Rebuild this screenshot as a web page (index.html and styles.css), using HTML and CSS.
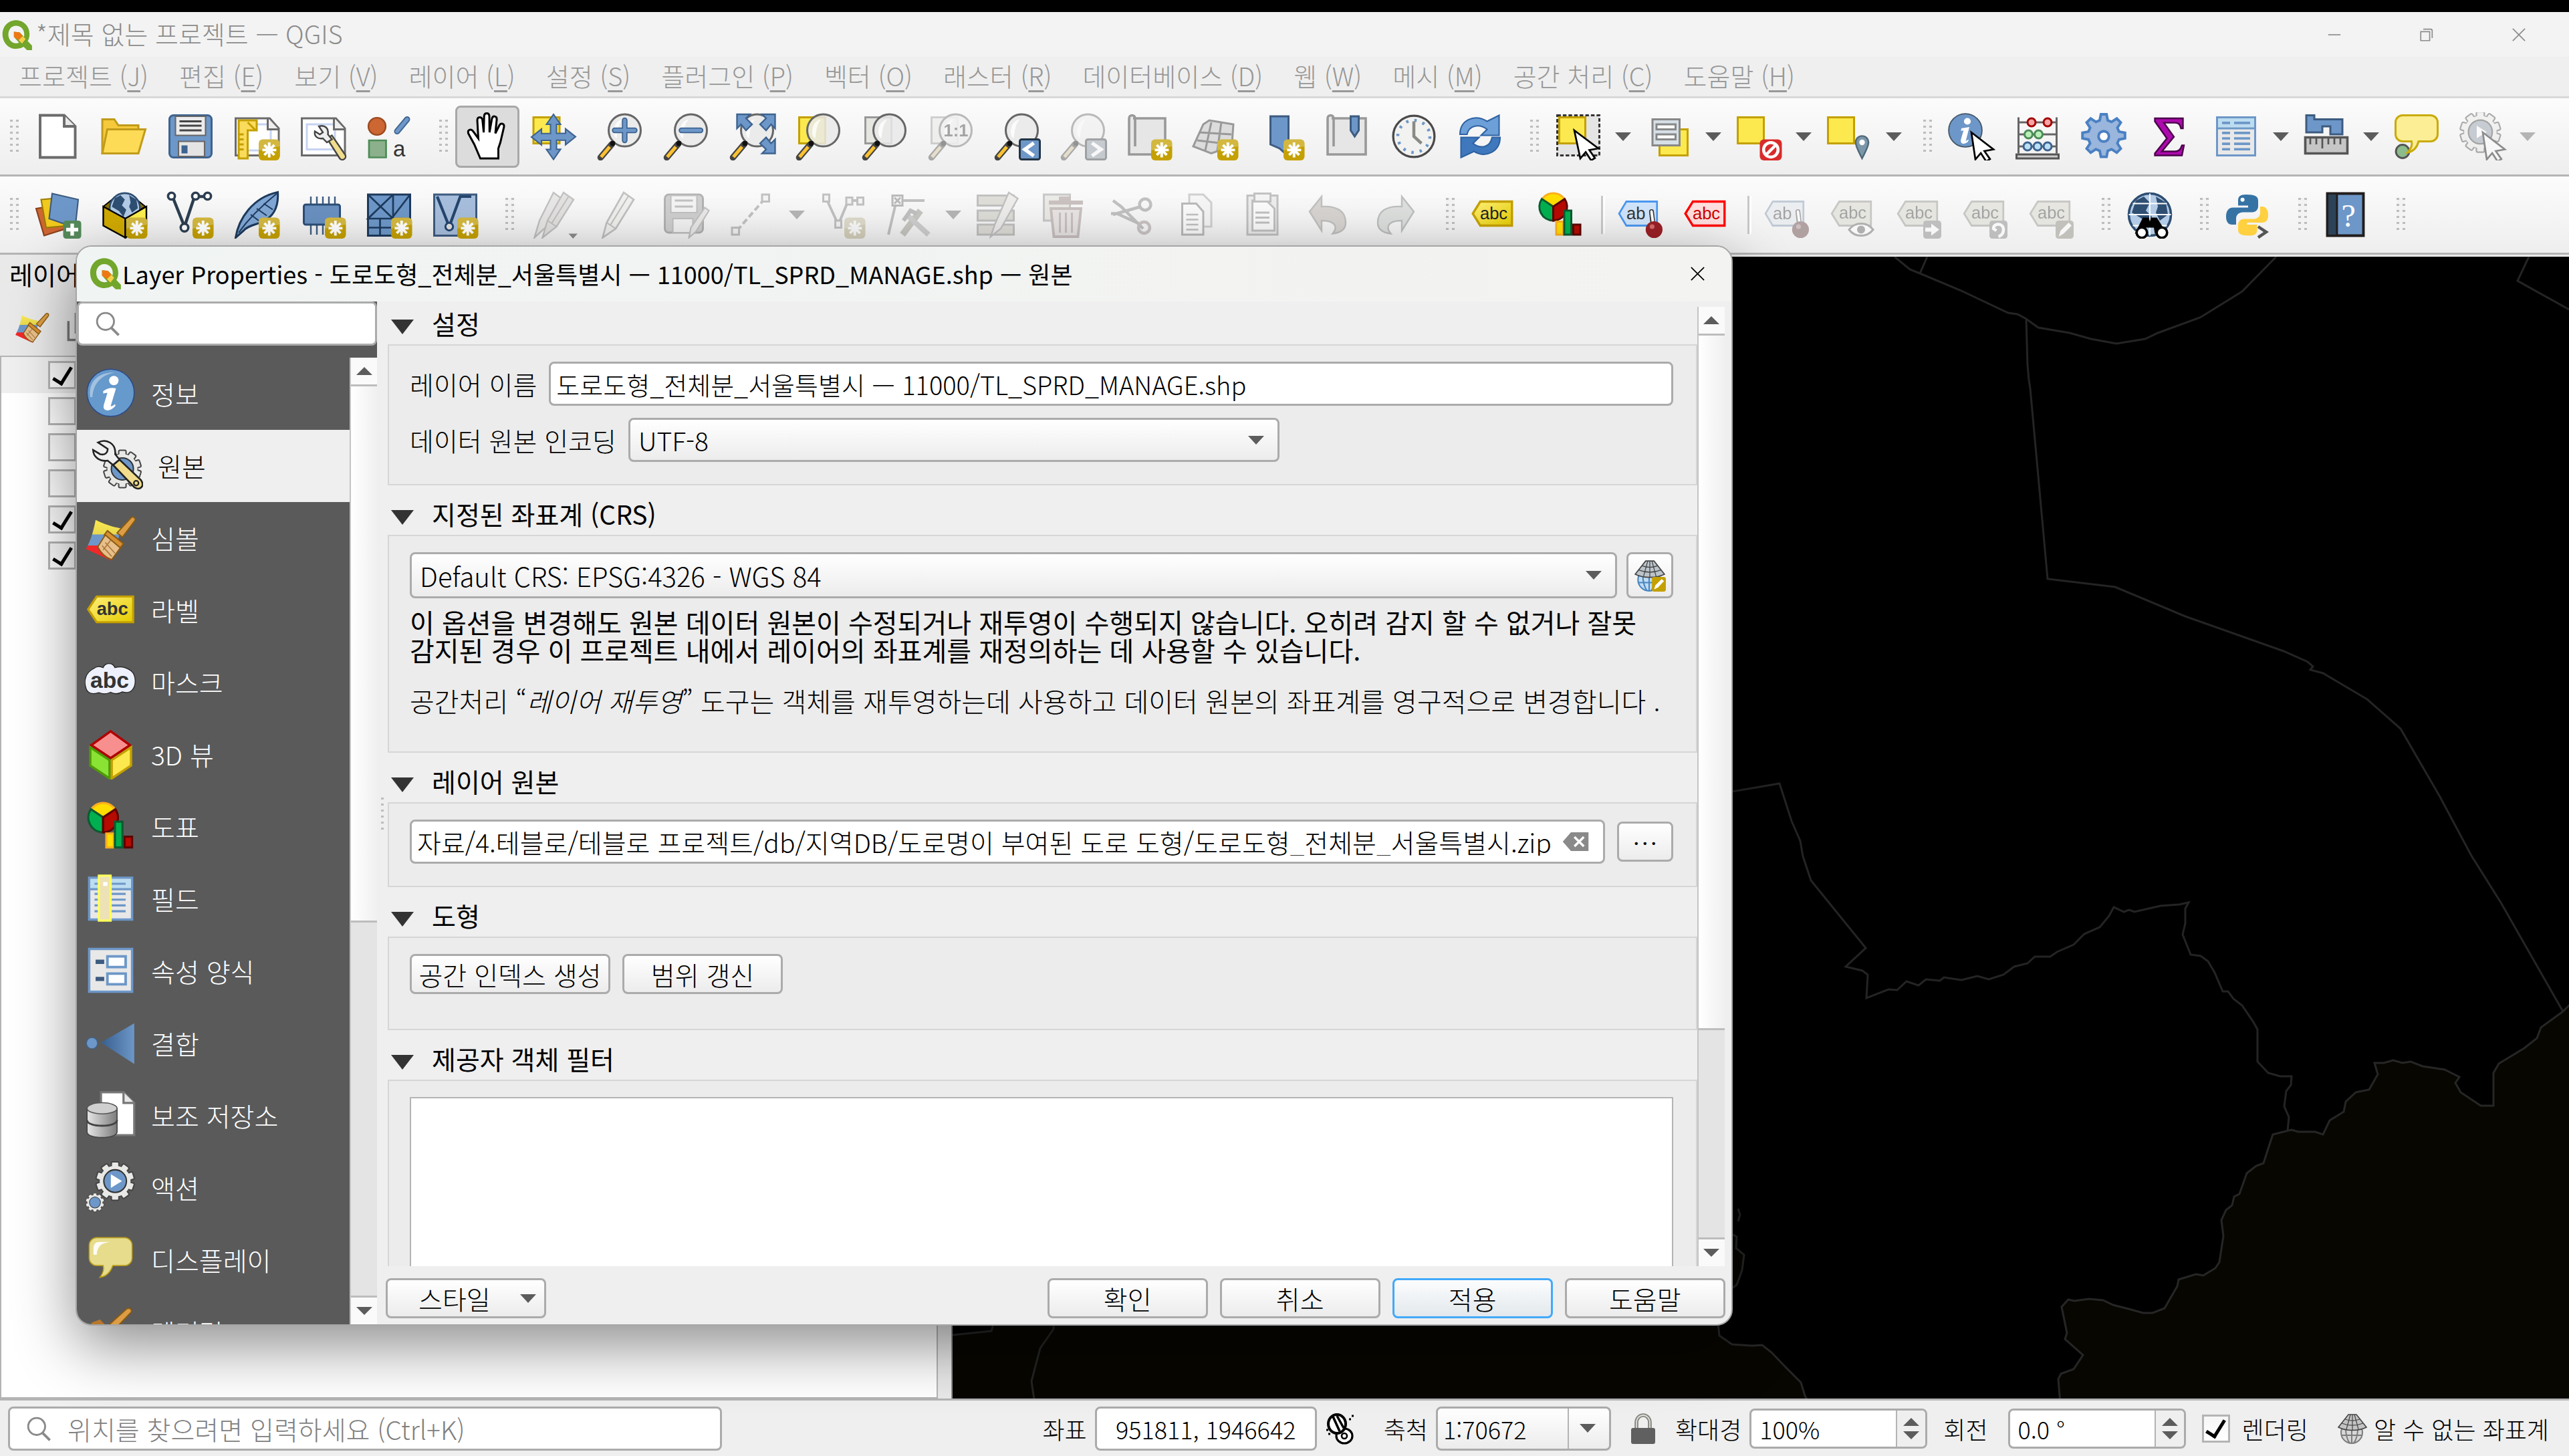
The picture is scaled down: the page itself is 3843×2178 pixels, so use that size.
FILE: index.html
```html
<!DOCTYPE html>
<html lang="ko">
<head>
  <meta charset="UTF-8" />
  <meta name="viewport" content="width=device-width, initial-scale=1.0"/>
  <title>*제목 없는 프로젝트 — QGIS</title>
  <link rel="stylesheet" href="styles.css">
</head>
<body>

  <!-- Icon sprite, 24 unit grid -->
  <svg class="sprite" aria-hidden="true">
    <defs>
      <linearGradient id="g-join" x1="0" y1="0" x2="1" y2="0"><stop offset="0" stop-color="#375f8f"/><stop offset="1" stop-color="#6d97c8"/></linearGradient>
      <linearGradient id="g-yellow" x1="0" y1="0" x2="1" y2="1"><stop offset="0" stop-color="#fff07a"/><stop offset="1" stop-color="#e4cb00"/></linearGradient>
      <linearGradient id="g-metal" x1="0" y1="0" x2="1" y2="0"><stop offset="0" stop-color="#e6e6e6"/><stop offset="1" stop-color="#7c7c7c"/></linearGradient>
      <linearGradient id="g-flag" x1="0" y1="0" x2="0" y2="1"><stop offset="0" stop-color="#fce94f"/><stop offset=".35" stop-color="#e8d94f"/><stop offset=".36" stop-color="#6d97c8"/><stop offset=".62" stop-color="#6d97c8"/><stop offset=".63" stop-color="#ef2929"/><stop offset="1" stop-color="#ef2929"/></linearGradient>
      <g id="p-star">
        <rect x="13" y="13.500" width="10.500" height="10.500" rx="2" fill="#c4a000"/>
        <path d="M13 19v-3.500a2 2 0 0 1 2-2h6.500a2 2 0 0 1 2 2V17z" fill="#fff" opacity=".25"/>
        <path d="M18.250 15v7.500M14.800 18.800h7M15.800 16.300l5 5M20.800 16.300l-5 5" stroke="#fff" stroke-width="1.300" fill="none"/>
      </g>
      <g id="p-lens">
        <path d="M8 16l-5.500 6.500" stroke="#444" stroke-width="3.200" stroke-linecap="round"/>
        <path d="M7 17.200l-4.300 5.100" stroke="#fcc131" stroke-width="1.700"/>
        <circle cx="14.500" cy="9" r="8" fill="#e9e9e9" fill-opacity=".85" stroke="#666" stroke-width="1"/>
        <path d="M9 10c0-4 2-6 4.500-6.500C11 6 11 10 10.500 13 9.500 12.500 9 11 9 10z" fill="#fff" opacity=".8"/>
        <circle cx="8.500" cy="15.500" r="1.300" fill="#111"/>
      </g>
      <g id="p-cursor"><path d="M12 10l11 8.500-4.500.8 2.800 4-1.900 1.200-2.700-4.200-2.700 3.200z" fill="#fff" stroke="#000" stroke-width=".9"/></g>
      <g id="p-gear"><path d="M10.600 1h2.800l.6 3 1.900.8 2.600-1.700 2 2-1.700 2.600.8 1.900 3 .6v2.800l-3 .6-.8 1.900 1.700 2.600-2 2-2.600-1.700-1.900.8-.6 3h-2.800l-.6-3-1.900-.8-2.600 1.700-2-2 1.700-2.600-.8-1.900-3-.6v-2.800l3-.6.8-1.900-1.700-2.600 2-2 2.600 1.700 1.900-.8z"/></g>
      <g id="p-cog">
        <g fill="#e8e8e6" stroke="#444" stroke-width=".8">
          <circle cx="12" cy="12" r="9"/>
          <rect x="9.800" y=".8" width="4.400" height="22.400" rx=".8"/>
          <rect x="9.800" y=".8" width="4.400" height="22.400" rx=".8" transform="rotate(36 12 12)"/>
          <rect x="9.800" y=".8" width="4.400" height="22.400" rx=".8" transform="rotate(72 12 12)"/>
          <rect x="9.800" y=".8" width="4.400" height="22.400" rx=".8" transform="rotate(108 12 12)"/>
          <rect x="9.800" y=".8" width="4.400" height="22.400" rx=".8" transform="rotate(144 12 12)"/>
        </g>
        <circle cx="12" cy="12" r="9" fill="#e8e8e6"/>
        <circle cx="12" cy="12" r="6.600" fill="#6d97c8" stroke="#333" stroke-width=".8"/>
      </g>
      <g id="p-tag"><path d="M1.500 12L5.500 6h17v12h-17z"/></g>
      <g id="p-globe">
        <circle cx="12" cy="12" r="10.500" fill="#b3cbe6" stroke="#2e4e72" stroke-width="1.200"/>
        <path d="M5 5l4-2 3 3-2 4 3 3-2 5-3-4-5-3zM15 3l5 3 1 6-4 3-2-4 1-3z" fill="#2e4e72"/>
      </g>
    </defs>

    <symbol id="i-qgis" viewBox="0 0 24 24">
      <path d="M11.500 1.500c5.500 0 9.700 4.300 9.700 10 0 2-.5 3.600-1.300 5l3.100 3.300V23h-3.600L17 20.600a10 10 0 0 1-5.500 1.500C6 22.100 1.800 17.500 1.800 11.600 1.800 5.800 6 1.500 11.500 1.500zm0 4C8.400 5.500 6 8 6 11.700c0 3.500 2.300 6.400 5.600 6.400.8 0 1.500-.2 2.100-.5L10 13.500V9.800l4.200.5 3 3.100c.2-.6.200-1.200.2-1.800 0-3.500-2.600-6.100-5.900-6.100z" fill="#72a62c"/>
      <path d="M10 9.800l3.800.4 2.600 2.700-3 3L10 13.500z" fill="#ee7913"/><path d="M13.400 15.900l3-3 2 2.100-2.600 3.300z" fill="#f5d04b"/>
    </symbol>
    <symbol id="i-new" viewBox="0 0 24 24"><path d="M3 1.500h12l5.500 5.500v15.500H3z" fill="#fff" stroke="#6b6b6b" stroke-width="1.300"/><path d="M15 1.500v5.500h5.500" fill="#e8e8e8" stroke="#6b6b6b" stroke-width="1.300"/></symbol>
    <symbol id="i-open" viewBox="0 0 24 24"><path d="M1 20.500v-17h6l2 3h10v4" fill="#f5c93b" stroke="#c19b1a"/><path d="M1 20.500L3.500 8.500H22.500l-3.500 12z" fill="#fedb57" stroke="#c19b1a"/></symbol>
    <symbol id="i-save" viewBox="0 0 24 24"><rect x="1.500" y="1.500" width="21" height="21" rx="2" fill="#6d97c8" stroke="#3d6390"/><path d="M4.500 2h15v9.500h-15z" fill="#ececec" stroke="#666" stroke-width=".7"/><path d="M6.500 4.500h11M6.500 6.700h11M6.500 9h11" stroke="#444"/><path d="M6 14.500h13v7.500H6z" fill="#e4e4e4" stroke="#666" stroke-width=".7"/><path d="M7.500 16.500h3v4h-3z" fill="#3d6390"/></symbol>
    <symbol id="i-layout-new" viewBox="0 0 24 24"><path d="M1.500 3h17l4.500 5v13.500H1.500z" fill="#fff" stroke="#6b6b6b"/><path d="M6 6h13v13H6z" fill="none" stroke="#c6d3f2"/><path d="M17.500 3v5.500H23" fill="#eee" stroke="#6b6b6b"/><path d="M3 4h9v5H7.500v14H3z" fill="#fbdb5b" stroke="#c4a000"/><path d="M3 11h2.500M3 13.500h2.500M3 16h2.500M3 18.500h2.500M7.500 5l4 4" stroke="#c4a000"/><use href="#p-star"/></symbol>
    <symbol id="i-layout-mgr" viewBox="0 0 24 24"><path d="M1.500 3h17l4.500 5v13.500H1.500z" fill="#fff" stroke="#6b6b6b"/><path d="M4 6h14v12.500H4z" fill="none" stroke="#c6d3f2"/><path d="M17.500 3v5.500H23" fill="#eee" stroke="#6b6b6b"/><path d="M14 13l2.500-1.500 6.500 9.500a1.600 1.600 0 0 1-2.600 2z" fill="#f0dc8c" stroke="#444" stroke-width=".8"/><path d="M10 7c3-1 5 1 4.500 4l2 2.500-2.500 1.500-2-2c-2.500.5-4.500-1-4-3.500l2.500 1.500 1.500-1z" fill="#eee" stroke="#444" stroke-width=".8"/></symbol>
    <symbol id="i-style" viewBox="0 0 24 24"><circle cx="6" cy="7" r="4.300" fill="#cc6633" stroke="#9c4a20" stroke-width=".8"/><path d="M16 9.500l5-6" stroke="#3d6390" stroke-width="3" stroke-linecap="round"/><path d="M16 9.500l5-6" stroke="#6d97c8" stroke-width="1.800" stroke-linecap="round"/><path d="M2 14h8.500v8.500H2z" fill="#8bb08b" stroke="#4d8b57" stroke-width=".9"/><text x="14" y="22" font-family="Liberation Sans" font-size="11" fill="#333">a</text></symbol>

    <symbol id="i-hand" viewBox="0 0 24 24"><path d="M8.500 23L5.500 16 2.500 10.500c-.5-2 1.500-2.500 2.600-.8l2.400 3.300-.5-9c0-2 2.300-2 2.600 0l.6 6 .2-8c.1-2 2.500-2 2.600 0l.1 8 1.200-6.800c.4-1.800 2.500-1.400 2.400.3L16 10.500l2-4c.8-1.500 2.600-.8 2.300.8L18.500 15l-1 3v5z" fill="#fff" stroke="#000" stroke-width="1"/></symbol>
    <symbol id="i-pan-sel" viewBox="0 0 24 24"><path d="M2 2.500h13v13H2z" fill="#fce94f" stroke="#c4a000"/><path d="M12 1l3.500 5h-2v4.500h4.500v-2.300l5 4-5 4v-2.300h-4.500v4.500h2L12 23.500l-3.500-5h2v-4.500H6v2.300l-5-4 5-4v2.300h4.500V6h-2z" fill="#6d97c8" stroke="#3d6390" stroke-width=".7"/></symbol>
    <symbol id="i-zoom-in" viewBox="0 0 24 24"><use href="#p-lens"/><path d="M14.500 4v10M9.500 9h10" stroke="#3d6390" stroke-width="2.800" stroke-linecap="round"/><path d="M14.500 4v10M9.500 9h10" stroke="#6d97c8" stroke-width="1.600" stroke-linecap="round"/></symbol>
    <symbol id="i-zoom-out" viewBox="0 0 24 24"><use href="#p-lens"/><path d="M9.800 9h9.500" stroke="#3d6390" stroke-width="2.800" stroke-linecap="round"/><path d="M9.800 9h9.500" stroke="#6d97c8" stroke-width="1.600" stroke-linecap="round"/></symbol>
    <symbol id="i-zoom-full" viewBox="0 0 24 24"><use href="#p-lens"/><path d="M4.500 1h6.500L9 3l3 3-3 3-2.500-3-2 2zM23.500 1H17l2 2-3 3 3 3 2.500-3 2 2zM23.500 20.500H17l2-2-3-3 3-3 2.500 3 2-2z" fill="#6d97c8" stroke="#3d6390" stroke-width=".8"/></symbol>
    <symbol id="i-zoom-sel" viewBox="0 0 24 24"><path d="M2.500 2.500h13v13h-13z" fill="#fce94f" stroke="#c4a000"/><use href="#p-lens"/></symbol>
    <symbol id="i-zoom-layer" viewBox="0 0 24 24"><path d="M2.500 2.500h13v13h-13z" fill="#e6e6e1" stroke="#999"/><use href="#p-lens"/></symbol>
    <symbol id="i-zoom-native" viewBox="0 0 24 24"><path d="M2.500 2.500h13v13h-13z" fill="#e6e6e1" stroke="#999"/><use href="#p-lens"/><text x="8.500" y="12" font-family="Liberation Sans" font-weight="bold" font-size="8.500" fill="#333">1:1</text></symbol>
    <symbol id="i-zoom-last" viewBox="0 0 24 24"><use href="#p-lens"/><rect x="13.500" y="13.500" width="10" height="10" rx="1" fill="#6d97c8" stroke="#234"/><path d="M20.500 15.300l-4.500 3.200 4.500 3.200" stroke="#fff" stroke-width="1.800" fill="none"/></symbol>
    <symbol id="i-zoom-next" viewBox="0 0 24 24"><use href="#p-lens"/><rect x="13.500" y="13.500" width="10" height="10" rx="1" fill="#6d97c8" stroke="#234"/><path d="M16.500 15.300l4.500 3.200-4.500 3.200" stroke="#fff" stroke-width="1.800" fill="none"/></symbol>
    <symbol id="i-map-new" viewBox="0 0 24 24"><path d="M4 3h16v18H2V3c0-2 3-2 3 0v14" fill="#e6e6e6" stroke="#999" stroke-width="1.200"/><use href="#p-star"/></symbol>
    <symbol id="i-map3d-new" viewBox="0 0 24 24"><path d="M6 6l3-2 12 2-1 14-6-1-4 1.500L1 17z" fill="#dcdcdc" stroke="#999"/><path d="M4 10l16 1M3 14l17 2M10 5l-3 14M15 5l-2 14" stroke="#999" fill="none"/><use href="#p-star"/></symbol>
    <symbol id="i-bookmark-new" viewBox="0 0 24 24"><path d="M6.500 2h9v20L11 18l-4.500-2z" fill="#6d97c8" stroke="#3d5b80"/><use href="#p-star"/></symbol>
    <symbol id="i-bookmark" viewBox="0 0 24 24"><path d="M4 3h17v18H2V3c0-2 3-2 3 0v14" fill="#e6e6e6" stroke="#999" stroke-width="1.200"/><path d="M13.500 2h4v7l-2 3-2-3z" fill="#6d97c8" stroke="#3d5b80"/></symbol>
    <symbol id="i-clock" viewBox="0 0 24 24"><circle cx="12" cy="12" r="10.300" fill="#f2f2f0" stroke="#4a4a4a" stroke-width="1.100"/><circle cx="12" cy="12" r="8" fill="none" stroke="#6d97c8" stroke-width="1.500" stroke-dasharray="1.200 2.990"/><path d="M12 4.500V12l3.800 3.500" fill="none" stroke="#8a8a85" stroke-width="1.500"/></symbol>
    <symbol id="i-refresh" viewBox="0 0 24 24"><path d="M2 11C2 4 9 .5 15.500 4.500L21.500 1.500v10h-9l3-3c-4-3-9-2-10 2.500z" fill="#6d9fd8" stroke="#2f62a3" stroke-width=".7"/><path d="M22 12.500c0 7-7 10.500-13 7L2.500 22.500v-10h9l-3 3c4 3 8.500 2 9.500-3z" fill="#3f78bd" stroke="#2f62a3" stroke-width=".7"/></symbol>

    <symbol id="i-select" viewBox="0 0 24 24"><path d="M1.500 1.500h21v20h-21z" fill="#e4e4e4" stroke="#333" stroke-dasharray="1.800 1"/><path d="M2.500 2.500h13v13h-13z" fill="#fce94f" stroke="#c4a000"/><path d="M10 9l12 9-4.500.8 2.800 4-1.900 1.200-2.700-4.200-2.700 3.200z" fill="#fff" stroke="#000" stroke-width=".9"/></symbol>
    <symbol id="i-select-form" viewBox="0 0 24 24"><path d="M7.500 8.500h14v13h-14z" fill="#fce94f" stroke="#c4a000"/><path d="M4 3.500h13.500v13H4z" fill="#d6dfe6" stroke="#888"/><path d="M6 6h9.500v2.500H6zM6 11h9.500v2.500H6z" fill="#fff" stroke="#888"/></symbol>
    <symbol id="i-deselect" viewBox="0 0 24 24"><path d="M1.500 2.500h13v13h-13z" fill="#fce94f" stroke="#c4a000"/><rect x="12.500" y="13.500" width="11" height="10.500" rx="2" fill="#d92b2b"/><circle cx="18" cy="18.700" r="3.600" fill="none" stroke="#fff" stroke-width="1.500"/><path d="M15.500 21.300l5-5" stroke="#fff" stroke-width="1.500"/></symbol>
    <symbol id="i-select-loc" viewBox="0 0 24 24"><path d="M1.500 2.500h13v13h-13z" fill="#fce94f" stroke="#c4a000"/><path d="M18.500 23c-2-4-3.200-6-3.200-8a3.200 3.200 0 0 1 6.400 0c0 2-1.200 4-3.200 8z" fill="#7b98ab" stroke="#50697a" stroke-width=".8"/><circle cx="18.500" cy="15" r="1.400" fill="#fff"/></symbol>

    <symbol id="i-identify" viewBox="0 0 24 24"><circle cx="9" cy="9" r="8.300" fill="#6d97c8" stroke="#456" stroke-width=".6"/><circle cx="10" cy="4.500" r="1.700" fill="#fff"/><path d="M7 8l4-.7-1.800 7 1.500-.8-.4 1.200c-2 1.600-4 1.200-3.500-1.200l1.300-4.500-1.300.3z" fill="#fff"/><use href="#p-cursor"/></symbol>
    <symbol id="i-abacus" viewBox="0 0 24 24"><path d="M2.500 2.500v18M21.500 2.500v18M2.500 5h19M2.500 11h19M2.500 17h19" stroke="#666" stroke-width="1"/><path d="M1.500 21h21v2h-21z" fill="#ccc" stroke="#555"/><g fill="#f6a5a5" stroke="#a40000"><circle cx="9" cy="5" r="2"/><circle cx="17" cy="5" r="2"/></g><g fill="#b9f0b9" stroke="#4d8b57"><circle cx="7.500" cy="11" r="2"/><circle cx="12.500" cy="11" r="2"/></g><g fill="#b9e0f5" stroke="#3d6390"><circle cx="7" cy="17" r="2"/><circle cx="12" cy="17" r="2"/><circle cx="17" cy="17" r="2"/></g></symbol>
    <symbol id="i-gear" viewBox="0 0 24 24"><g fill="#9ab6dc" stroke="#4a80c4" stroke-width="1.300"><use href="#p-gear"/></g><circle cx="12" cy="12" r="2.600" fill="#fff" stroke="#4a80c4" stroke-width="1.300"/></symbol>
    <symbol id="i-sum" viewBox="0 0 24 24"><path d="M4.500 3h14v5h-1c-.5-2-1-2.800-3-2.800H9l5 7-6 7.300h6.500c2 0 2.800-1 3.500-3h1L18 21.500H4.500v-1l6-7.500-6-8.500z" fill="#ad0aad" stroke="#4b034b" stroke-width=".8"/></symbol>
    <symbol id="i-table" viewBox="0 0 24 24"><path d="M2.500 2.500h19v19h-19z" fill="#e8e8e8" stroke="#6d97c8"/><path d="M3 3h18v4.500H3z" fill="#bcdcf0"/><path d="M2.500 8h19" stroke="#6d97c8"/><path d="M5 5.300h4M11 5.300h8M5 10.300h4M11 10.300h8M5 13h4M11 13h8M5 15.700h4M11 15.700h8M5 18.400h4M11 18.400h8" stroke="#6d97c8" stroke-width="1.200"/></symbol>
    <symbol id="i-measure" viewBox="0 0 24 24"><path d="M2 1.500h4v2h14v7.500h-6v-4h-4v3H2z" fill="#6d97c8" stroke="#3d5b80"/><path d="M1.500 12.500h21v8h-21z" fill="#c6c6c6" stroke="#555" stroke-width="1.200"/><path d="M4 13v3M7 13v3M10 13v5M13 13v3M16 13v3M19 13v3" stroke="#555" stroke-width=".9"/></symbol>
    <symbol id="i-maptip" viewBox="0 0 24 24"><circle cx="5" cy="19.500" r="3.300" fill="#8cbb8c" stroke="#555"/><path d="M5 1.500h14a3.500 3.500 0 0 1 3.500 3.500v6a3.500 3.500 0 0 1-3.500 3.500h-6c-.8 3-2.500 5-5.500 5.500 2-2 2.500-3.500 2-5.500H5A3.500 3.500 0 0 1 1.500 11V5A3.500 3.500 0 0 1 5 1.500z" fill="#fbee95" stroke="#c9ab0c" stroke-width="1"/></symbol>
    <symbol id="i-action-run" viewBox="0 0 24 24"><g transform="translate(0 -1) scale(.9)"><use href="#p-cog"/><path d="M10 8.500l5.500 3.500-5.500 3.500z" fill="#fff"/></g><use href="#p-cursor"/></symbol>

    <symbol id="i-datasource" viewBox="0 0 24 24"><path d="M1 9l12-2 3 12-11 3.500z" fill="#cc6633" stroke="#8b3f18" stroke-width=".7"/><path d="M3.500 4.500L15 3.500l2 14L6 18.500z" fill="#f0c81e" stroke="#9c7d00" stroke-width=".7"/><path d="M9 1.500l13 3-1.500 14L7.500 14z" fill="#6d97c8" stroke="#3d5b80" stroke-width=".7"/><rect x="14.500" y="15" width="9" height="9" rx="1.500" fill="#55895a"/><path d="M19 16.500v6M16 19.500h6" stroke="#fff" stroke-width="1.800"/></symbol>
    <symbol id="i-geopackage" viewBox="0 0 24 24"><path d="M1.500 8l5-4h11l5 4-10.500 6z" fill="#8a6f00" stroke="#000" stroke-width=".6"/><g transform="translate(3.600 .2) scale(.72)"><use href="#p-globe"/></g><path d="M1.500 8L12.500 14v9.500l-11-6z" fill="#d0a900" stroke="#000" stroke-width=".8"/><path d="M23 8L12.500 14v9.500l10.500-6z" fill="#fcee4f" stroke="#000" stroke-width=".8"/><use href="#p-star"/></symbol>
    <symbol id="i-shapefile" viewBox="0 0 24 24"><path d="M3 3l6 15L14 3h5" fill="none" stroke="#2c3e50" stroke-width="1.500"/><g fill="#fff" stroke="#2c3e50" stroke-width="1.200"><circle cx="2.500" cy="2.800" r="1.700"/><circle cx="9" cy="18.500" r="1.900"/><circle cx="14.500" cy="2.800" r="1.700"/><circle cx="20.500" cy="2.800" r="1.700"/></g><use href="#p-star"/></symbol>
    <symbol id="i-spatialite" viewBox="0 0 24 24"><path d="M1.500 23.500C3 14 10 3.500 22.500.8 23 8 20.500 13 15 15.500c-4 1.800-7.500 2-9.500 4.500z" fill="#7fa6d4" stroke="#1d3a5c" stroke-width="1"/><path d="M3 21C8 14 14 8 22 1.500M9 12l4 3M12 9l5 3.500M15.500 6.500l4.500 3" stroke="#1d3a5c" stroke-width=".7" fill="none"/><use href="#p-star"/></symbol>
    <symbol id="i-memory" viewBox="0 0 24 24"><path d="M6 3v19M9 3v19M12 3v19M15 3v19M18 3v19" stroke="#3d5b80" stroke-width=".8"/><rect x="2.500" y="7" width="18" height="10" rx="1" fill="#6990c0" stroke="#2c4e75"/><use href="#p-star"/></symbol>
    <symbol id="i-mesh" viewBox="0 0 24 24"><path d="M1.500 2h21v20.500h-21z" fill="#6d97c8" stroke="#1d3a5c"/><path d="M14 2v20.500M1.500 14h21M1.500 2L14 14M14 2L1.500 14l6 0v8.500M22.500 2L14 13M1.500 18.500H14" stroke="#1d3a5c" fill="none" stroke-width=".9"/><use href="#p-star"/></symbol>
    <symbol id="i-virtual" viewBox="0 0 24 24"><path d="M1.500 2h21v20.500h-21z" fill="#a6bddb" stroke="#3d5b80"/><path d="M3 3l6 15L14.500 3h5.500" fill="none" stroke="#24466e" stroke-width="1.400"/><circle cx="9" cy="18" r="1.900" fill="#ddd" stroke="#24466e"/><use href="#p-star"/></symbol>

    <symbol id="i-edits" viewBox="0 0 24 24"><path d="M2.500 23.500L5 15 12 1l4 3-7.500 14z" fill="#d8cfc9" stroke="#777" stroke-width=".8"/><path d="M6.500 23.500l2.500-8.500L17 1l5 3.500L13.500 18z" fill="#d2c2bb" stroke="#777" stroke-width=".8"/><path d="M9 15l4.500 3M11 16.500L19.500 3" stroke="#777" stroke-width=".7"/><path d="M19.500 21.500h4.500l-2.250 2.500z" fill="#000"/></symbol>
    <symbol id="i-pencil" viewBox="0 0 24 24"><path d="M3.500 23.500L5.500 16 14 1l5 3.500L10 19z" fill="#e8e6d8" stroke="#777" stroke-width=".9"/><path d="M5.500 16l4.500 3M7.500 17L16.500 2.500" stroke="#777" stroke-width=".7"/></symbol>
    <symbol id="i-save-edit" viewBox="0 0 24 24"><rect x="1.500" y="2" width="19" height="19" rx="2" fill="#999" stroke="#555"/><path d="M4.500 2.500h13v8.500h-13zM5.500 14h10v7h-10z" fill="#eee" stroke="#777" stroke-width=".7"/><path d="M6.500 5h9M6.500 8h9" stroke="#777"/><path d="M13.500 23.500l1-5 7-10 2 1.500-6.500 10.500z" fill="#e2d6cf" stroke="#777" stroke-width=".7"/></symbol>
    <symbol id="i-digitize" viewBox="0 0 24 24"><path d="M4.500 20L18 4.500" stroke="#777" stroke-width="1.300" stroke-dasharray="3 1.500"/><path d="M2 18.500h3.500V22H2zM17 2h3.500v3.500H17z" fill="#eee" stroke="#777"/></symbol>
    <symbol id="i-vertex-add" viewBox="0 0 24 24"><path d="M4 4l6 13L15 5h5" fill="none" stroke="#777" stroke-width="1.300"/><path d="M2.500 2h3v3.500h-3zM8.500 15h3v3.500h-3zM14 3.500h3V7h-3zM19.500 3.500h3V7h-3z" fill="#eee" stroke="#777"/><use href="#p-star"/></symbol>
    <symbol id="i-vertex" viewBox="0 0 24 24"><path d="M2 22L6 5h14" fill="none" stroke="#777" stroke-width="1.300"/><path d="M4 2.500h5v5H4zM5 3.500l3 3M8 3.500l-3 3" fill="#eee" stroke="#666"/><path d="M18 10L9 22" stroke="#8a8660" stroke-width="3.200"/><path d="M11 12l11 10" stroke="#999" stroke-width="2.600"/><path d="M9.500 15l3.500-5 3 1.500" fill="none" stroke="#777" stroke-width="2"/></symbol>
    <symbol id="i-attr-edit" viewBox="0 0 24 24"><path d="M1.500 2.500h18v5h-18zM1.500 10h18v5h-18zM1.500 17h18v5h-18z" fill="#c2bb8c" stroke="#777"/><path d="M8 23l2-6L17 1l4.500 3L13 19z" fill="#e8dcd8" stroke="#777" stroke-width=".8"/></symbol>
    <symbol id="i-trash" viewBox="0 0 24 24"><path d="M1.500 2h13v13h-13z" fill="#ddd8b8" stroke="#888"/><path d="M4 6h17M9 4h6" stroke="#b56b6b" stroke-width="2"/><path d="M5 9h15l-1.500 14h-12z" fill="#e6c8c8" stroke="#b56b6b" stroke-width="1.300"/><path d="M9.500 11v10M12.500 11v10M15.500 11v10" stroke="#b56b6b"/></symbol>
    <symbol id="i-cut" viewBox="0 0 24 24"><path d="M2 11.500h3L17 17M3 5l4 3 11 11M17 8L3 12" fill="none" stroke="#777" stroke-width="1.500"/><circle cx="19" cy="7" r="2.800" fill="none" stroke="#777" stroke-width="1.500"/><circle cx="18.500" cy="18.500" r="2.800" fill="none" stroke="#a77" stroke-width="1.500"/></symbol>
    <symbol id="i-copy" viewBox="0 0 24 24"><path d="M8 2h7l4 4v12H8z" fill="#f2f2f2" stroke="#999"/><path d="M4.500 6.500h7l3.500 4V22H4.500z" fill="#fff" stroke="#666"/><path d="M6.500 12h6M6.500 14.500h6M6.500 17h6M6.500 19.500h6" stroke="#777" stroke-width=".9"/></symbol>
    <symbol id="i-group" viewBox="0 0 24 24"><path d="M7 3h12v13H7z" fill="#eee" stroke="#777" stroke-width="1.300"/><path d="M2 8v13h13" fill="none" stroke="#777" stroke-width="1.600"/></symbol>
    <symbol id="i-paste" viewBox="0 0 24 24"><path d="M4 2.500h15V22H4z" fill="#ddd" stroke="#777"/><path d="M6.500 5h7l4 4v11h-11z" fill="#fff" stroke="#777"/><path d="M7.500 1.500h8v4h-8z" fill="#eee" stroke="#777"/><path d="M8 11h7M8 13.500h7M8 16h7" stroke="#777"/></symbol>
    <symbol id="i-undo" viewBox="0 0 24 24"><path d="M2 10.500L8 3v5c8-.5 12 2.500 12 8 0 3-2 5-6.500 5.500 3-3.500 1-6.500-5.500-6.500v5z" fill="#b8a392" stroke="#776" stroke-width=".8"/></symbol>
    <symbol id="i-redo" viewBox="0 0 24 24"><path d="M21 10.500L15 3v5C7 7.500 3 10.500 3 16c0 3 2 5 6.500 5.500-3-3.500-1-6.500 5.500-6.500v5z" fill="#b4c2b8" stroke="#677" stroke-width=".8"/></symbol>

    <symbol id="i-label" viewBox="0 0 24 24"><g fill="url(#g-yellow)" stroke="#c4a000" stroke-width="1"><use href="#p-tag"/></g><text x="5.500" y="14.800" font-family="Liberation Sans" font-weight="bold" font-size="8.500" fill="#333">abc</text></symbol>
    <symbol id="i-label-plain" viewBox="0 0 24 24"><g fill="url(#g-yellow)" stroke="#c4a000" stroke-width="1.200" transform="translate(0 -.5) scale(.93 1)"><use href="#p-tag"/></g><text x="5" y="14.300" font-family="Liberation Sans" font-size="8.500" fill="#222">abc</text></symbol>
    <symbol id="i-diagram" viewBox="0 0 24 24"><circle cx="8.500" cy="8" r="6.700" fill="#fd0" stroke="#fcaf1e" stroke-width="1"/><path d="M8.500 8L2.800 4.200A6.900 6.900 0 0 0 8.500 15z" fill="#00b050" stroke="#0c5a31"/><path d="M8.500 8l5.700-3.800A6.900 6.900 0 0 1 8.500 15z" fill="#b70a00" stroke="#5c0500"/><path d="M10 15.500h3.500V22H10z" fill="#fd0" stroke="#fcaf1e"/><path d="M18.500 17h3.500v5h-3.500z" fill="#b70a00" stroke="#5c0500"/><path d="M14 10h3.500v12H14z" fill="#00b050" stroke="#0c5a31"/></symbol>
    <symbol id="i-pin" viewBox="0 0 24 24"><g transform="translate(0 -.5) scale(.9 1)" fill="#cfe4fb" stroke="#4a97f0"><use href="#p-tag"/></g><text x="5" y="14.300" font-family="Liberation Sans" font-size="8.500" fill="#333">ab</text><path d="M17.500 10.500l.8 7" stroke="#333" stroke-width="2.400" stroke-linecap="round"/><path d="M17.500 10.500l.8 6" stroke="#fff" stroke-width="1.300" stroke-linecap="round"/><circle cx="18.800" cy="19.500" r="4.200" fill="#9a2026"/><circle cx="17.800" cy="18" r="1.200" fill="#d46a6a"/></symbol>
    <symbol id="i-label-red" viewBox="0 0 24 24"><g transform="translate(0 -.5) scale(.93 1)" fill="#ffdede" stroke="#f00" stroke-width="1.200"><use href="#p-tag"/></g><text x="5" y="14.300" font-family="Liberation Sans" font-size="8.500" fill="#c00">abc</text></symbol>
    <symbol id="i-label-show" viewBox="0 0 24 24"><g transform="translate(0 -.5) scale(.93 1)" fill="#d6d2aa" stroke="#887"><use href="#p-tag"/></g><text x="5" y="14" font-family="Liberation Sans" font-size="8.500" fill="#333">abc</text><path d="M10 19.500c3-4 9-4 12 0-3 4-9 4-12 0z" fill="#fff" stroke="#555"/><circle cx="16" cy="19.500" r="2" fill="#555"/></symbol>
    <symbol id="i-label-move" viewBox="0 0 24 24"><g transform="translate(0 -.5) scale(.93 1)" fill="#d6d2aa" stroke="#887"><use href="#p-tag"/></g><text x="5" y="14" font-family="Liberation Sans" font-size="8.500" fill="#333">abc</text><rect x="14" y="15" width="9" height="9" rx="1.500" fill="#777"/><path d="M15 18.500h3v-2l4 3-4 3v-2h-3z" fill="#fff"/></symbol>
    <symbol id="i-label-rotate" viewBox="0 0 24 24"><g transform="translate(0 -.5) scale(.93 1)" fill="#d6d2aa" stroke="#887"><use href="#p-tag"/></g><text x="5" y="14" font-family="Liberation Sans" font-size="8.500" fill="#333">abc</text><rect x="14" y="15" width="9" height="9" rx="1.500" fill="#777"/><path d="M17.500 20l-1.500-1c0-3 5-3 5 .5 0 2-1 3-2.500 3.500" stroke="#fff" stroke-width="1.500" fill="none"/></symbol>
    <symbol id="i-label-edit" viewBox="0 0 24 24"><g transform="translate(0 -.5) scale(.93 1)" fill="#d6d2aa" stroke="#887"><use href="#p-tag"/></g><text x="5" y="14" font-family="Liberation Sans" font-size="8.500" fill="#333">abc</text><rect x="14" y="15" width="9" height="9" rx="1.500" fill="#8a7e50"/><path d="M15.500 23l1-3 4-4 1.500 1.500-4 4z" fill="#fff"/></symbol>
    <symbol id="i-metasearch" viewBox="0 0 24 24"><use href="#p-globe"/><path d="M12 1.500v21M1.500 12h21M3.500 6.500h17M3.500 17.500h17" stroke="#fff" stroke-width=".6"/><path d="M8.500 13.500h3l.5 2 .5-2h3l5 8h-6l-.5-3h-4l-.5 3h-5z" fill="#000"/><g fill="#fff" stroke="#000" stroke-width="1.200"><circle cx="8" cy="21" r="2.600"/><circle cx="18" cy="21" r="2.600"/></g></symbol>
    <symbol id="i-python" viewBox="0 0 24 24"><path d="M11 2c-3 0-4 1-4 3v2.500h5v1H4.500C2 8.500 1 10.500 1 13s1 4 3 4h2v-3c0-2 1.500-3.200 3.500-3.200h4.500c1.800 0 3-1.300 3-3V5c0-2-1.500-3-6-3z" fill="#3673a5"/><circle cx="9.200" cy="4.600" r="1" fill="#fff"/><path d="M12.500 22.500c3 0 4-1 4-3V17h-5v-1H19c2.500 0 3-2 3-4s-1-4-3-4h-1v3c0 2-1.500 3.200-3.500 3.200H10c-1.800 0-3 1.300-3 3v2.500c0 2 1.500 2.800 5.500 2.800z" fill="#ffd040"/><path d="M17 18l4 2.700-4 2.700" fill="none" stroke="#555" stroke-width="1.500"/></symbol>
    <symbol id="i-help" viewBox="0 0 24 24"><path d="M2.500 1.500h18v21h-18z" fill="#6d97c8" stroke="#221d1d" stroke-width="1.300"/><path d="M3 2h4v20H3z" fill="#2c4257"/><path d="M7.300 1.500v21" stroke="#221d1d"/><text x="9.500" y="18" font-family="Liberation Serif" font-size="16" fill="#fff">?</text></symbol>

    <symbol id="i-info" viewBox="0 0 24 24"><circle cx="12" cy="12" r="11" fill="#6699cc" stroke="#2c4a8a" stroke-width=".5"/><path d="M2.500 14C1.500 7 6 2.500 14 2.500 7 4 4 8 3.500 14z" fill="#fff" opacity=".4"/><circle cx="13.500" cy="6.300" r="2.200" fill="#fff"/><path d="M8.500 11.300c2-1.500 4-1.800 6-1.300l-2.500 8.300c.8 0 1.400-.5 2-1l.3.8c-2.500 3-6.300 2.800-5.500-.4l1.700-5.600c-.7-.1-1.300.1-1.900.3z" fill="#fff"/></symbol>
    <symbol id="i-source" viewBox="0 0 24 24"><g transform="translate(5 4.500) scale(.78)"><use href="#p-cog"/></g><path d="M10 12l3-2.500 10 9.500c2 3-.5 5-3 3.500z" fill="#f0dc8c" stroke="#222" stroke-width=".8"/><circle cx="20.800" cy="20.500" r="1.100" fill="none" stroke="#222" stroke-width=".7"/><path d="M3 1.500c4-2 8.500.5 8 5.500l2 2.500-3 2.500-2.500-2C4 10.500.8 8.500.7 5L4 7c2 .5 3.500-.5 3.500-2.500z" fill="#eee" stroke="#222" stroke-width=".8"/></symbol>
    <symbol id="i-symbology" viewBox="0 0 24 24"><path d="M5 4c4 2 7 3 12 4l-4.500 15C8 21 4 19 .5 17.500 3 13 4 9 5 4z" fill="url(#g-flag)"/><path d="M15 10l6.500-7c1-1 2.500.3 1.700 1.500L17.500 12z" fill="#dc9d45" stroke="#8a5a12" stroke-width=".6"/><path d="M10.500 9l7.500 6-1.500 2-7.500-6z" fill="#d68f32" stroke="#8a5a12" stroke-width=".6"/><path d="M9.500 11l7 6-4 5.500c-3-1-5-3-6.500-6z" fill="#e8bf8a" stroke="#8a5a12" stroke-width=".6"/><path d="M8 16l4.500 5M9.500 14.500L14 19.500M8.500 18L12 13.500" stroke="#a8783c" stroke-width=".5"/></symbol>
    <symbol id="i-mask" viewBox="0 0 24 24"><path d="M4 6c2-1.500 3-1 4.500-.5 1-2.500 4.500-2.500 5.500 0 3-.8 5.500 0 7.500 1.500 2.500 2 2.500 7 .5 9-1.500 1.500-3 1.300-4.500.8-2 1.200-4 1-5.500.2-2 1-4 .8-5.500.2-3 1-5.500.2-6-2.200-1-3-.5-7 3.500-9z" fill="#eef1fc" stroke="#222" stroke-width=".4"/><text x="2.500" y="15" font-family="Liberation Sans" font-weight="bold" font-size="10.500" fill="#333">abc</text></symbol>
    <symbol id="i-3d" viewBox="0 0 24 24"><path d="M12 1.500L21 8l-9 6-9-6z" fill="#f78f8f" stroke="#b00000" stroke-width="1.100"/><path d="M2.500 9l9 6v8.500l-9-6z" fill="#8ae234" stroke="#4e9a06" stroke-width="1.100"/><path d="M21.500 9l-9 6v8.500l9-6z" fill="#fce94f" stroke="#c4a000" stroke-width="1.100"/></symbol>
    <symbol id="i-fields" viewBox="0 0 24 24"><path d="M2 2.500h20v19.500H2z" fill="#e8e8e8" stroke="#6d97c8" stroke-width="1.100"/><path d="M2.500 3h19v4.500h-19z" fill="#bcdcf0"/><path d="M2 7.800h20" stroke="#6d97c8"/><path d="M4.500 5.300h14.500M4.500 10h14.500M4.500 12.700h14.500M4.500 15.400h14.500M4.500 18.100h14.500" stroke="#6d97c8"/><path d="M6.500 1.500h5.500v21H6.500z" fill="#ede2b5" stroke="#ffff5c"/><path d="M8.500 4.500h2v1.800h-2z" fill="#fff"/></symbol>
    <symbol id="i-form" viewBox="0 0 24 24"><path d="M2 2h20v20H2z" fill="#e8e8e8" stroke="#6d97c8" stroke-width="1.100"/><path d="M5 8h4M5 16h4" stroke="#3d5b80" stroke-width="2"/><path d="M10.500 5.500h8.500v5h-8.500zM10.500 13.500h8.500v5h-8.500z" fill="#fcfeff" stroke="#6d97c8" stroke-width="1.200"/></symbol>
    <symbol id="i-join" viewBox="0 0 24 24"><circle cx="3.300" cy="12.300" r="2.600" fill="#6d97c8" stroke="#3d6390" stroke-width=".4"/><path d="M7.500 12L23 3v19z" fill="url(#g-join)"/></symbol>
    <symbol id="i-aux" viewBox="0 0 24 24"><path d="M7.500 1.500H18l5 5V21.500H7.500z" fill="#fff" stroke="#777"/><path d="M18 1.500v5h5" fill="#e8e8e8" stroke="#777"/><path d="M1 9v11c0 3.500 14 3.500 14 0V9z" fill="url(#g-metal)" stroke="#444" stroke-width=".5"/><ellipse cx="8" cy="9" rx="7" ry="2.600" fill="#cfcfcf" stroke="#555" stroke-width=".5"/><path d="M1 14.500c0 3.500 14 3.500 14 0" fill="none" stroke="#444" stroke-width=".9"/></symbol>
    <symbol id="i-action" viewBox="0 0 24 24"><g transform="translate(4.500 -.3) scale(.8)"><use href="#p-cog"/><path d="M9.500 8l6.500 4-6.500 4z" fill="#fff"/></g><g transform="translate(0 14.600) scale(.39)"><use href="#p-cog"/></g></symbol>
    <symbol id="i-display" viewBox="0 0 24 24"><path d="M5.500 2h13A3.500 3.500 0 0 1 22 5.500v6a3.500 3.500 0 0 1-3.500 3.500H13c-1 3-3 5-6 5.500 1.500-2 2-4 1.500-5.500h-3A3.500 3.500 0 0 1 2 11.500v-6A3.500 3.500 0 0 1 5.500 2z" fill="#e6dc8c" stroke="#b99d1c" stroke-width=".5"/><path d="M4 10V7c0-2 1-3 3-3h5c-4 .5-6 1.500-6.500 6z" fill="#fff" opacity=".9"/></symbol>
    <symbol id="i-render" viewBox="0 0 24 24"><path d="M9 11l10.500-9.500c1.500-.8 2.700.5 2 1.700L11 14z" fill="#dc9d45" stroke="#8a5a12" stroke-width=".6"/><path d="M3 8l4-1.500 5 5-4 5-5-1z" fill="#b8772c"/></symbol>
    <symbol id="i-crs" viewBox="0 0 24 24"><circle cx="11.500" cy="15" r="8" fill="#bfdcf3" stroke="#4a86c0"/><path d="M11.500 8v15M4 17h15M7 12c0 5 1 8 3 11M16 12c0 5-1 8-3 11" stroke="#4a86c0" fill="none"/><path d="M9 1.500h6L22.500 11c-6 3-15 3-21 0z" fill="#bcc4cb" stroke="#444" stroke-width=".8"/><path d="M6.500 5c4 1.500 7 1.500 11 0M4 8c5 2 11 2 16 0M10.500 1.500L7.500 12.500M12 1.500v11.500M13.500 1.500l3 11" stroke="#444" stroke-width=".6" fill="none"/></symbol>
    <symbol id="i-pen-badge" viewBox="0 0 24 24"><use href="#i-crs"/><rect x="13.500" y="13" width="10" height="10.500" rx="1.500" fill="#c4a000"/><path d="M15 22l1-3 4.500-4.500 1.700 1.500-4.300 4.500z" fill="#fff"/></symbol>
    <symbol id="i-search" viewBox="0 0 24 24"><circle cx="10" cy="10" r="8" fill="none" stroke="#8a8a8a" stroke-width="1.800"/><path d="M15.500 16l7 7" stroke="#8a8a8a" stroke-width="2.400"/></symbol>
    <symbol id="i-mouse" viewBox="0 0 24 24"><ellipse cx="14.500" cy="17.500" rx="6" ry="5.500" fill="#fff" stroke="#000" stroke-width="1.600"/><ellipse cx="9" cy="8.500" rx="6.500" ry="7" fill="#fff" stroke="#000" stroke-width="2"/><path d="M6 3l5 11M9 2.500l5 9" stroke="#000" stroke-width="1.800"/><circle cx="14.500" cy="17.500" r="2" fill="none" stroke="#000" stroke-width="1.300"/><path d="M18 5h1.500M20 2.500h1.500M1 13h1.500M2.500 16H4" stroke="#000" stroke-width="1.500"/></symbol>
    <symbol id="i-lock" viewBox="0 0 24 24"><path d="M7 12V7.500a5 5.500 0 0 1 10 0V12" fill="none" stroke="#84847c" stroke-width="2.800"/><path d="M7 12V7.500a5 5.500 0 0 1 10 0V12" fill="none" stroke="#ddd" stroke-width=".9"/><rect x="3" y="11.500" width="18" height="12" rx="1.500" fill="#606060"/></symbol>
    <symbol id="i-clear" viewBox="0 0 24 24"><path d="M1 12l7-8h15v16H8z" fill="#8a8a8a"/><path d="M11 8l8 8M19 8l-8 8" stroke="#fff" stroke-width="2"/></symbol>
    <symbol id="i-close" viewBox="0 0 24 24"><path d="M1 1l22 22M23 1L1 23" stroke="currentColor" stroke-width="2" fill="none"/></symbol>
    <symbol id="i-min" viewBox="0 0 24 24"><path d="M1 12h22" stroke="currentColor" stroke-width="2"/></symbol>
    <symbol id="i-max" viewBox="0 0 24 24"><path d="M1.500 6.500h16v16h-16zM6 2h13a3 3 0 0 1 3 3v13" fill="none" stroke="currentColor" stroke-width="2"/></symbol>
  </svg>

  <header class="titlebar">
    <svg class="logo"><use href="#i-qgis"/></svg>
    <h1>*제목 없는 프로젝트 — QGIS</h1>
    <div class="win-buttons">
      <button aria-label="최소화"><svg><use href="#i-min"/></svg></button>
      <button aria-label="이전 크기로"><svg><use href="#i-max"/></svg></button>
      <button aria-label="닫기"><svg><use href="#i-close"/></svg></button>
    </div>
  </header>

  <nav class="menubar">
    <button>프로젝트 (<u>J</u>)</button>
    <button>편집 (<u>E</u>)</button>
    <button>보기 (<u>V</u>)</button>
    <button>레이어 (<u>L</u>)</button>
    <button>설정 (<u>S</u>)</button>
    <button>플러그인 (<u>P</u>)</button>
    <button>벡터 (<u>O</u>)</button>
    <button>래스터 (<u>R</u>)</button>
    <button>데이터베이스 (<u>D</u>)</button>
    <button>웹 (<u>W</u>)</button>
    <button>메시 (<u>M</u>)</button>
    <button>공간 처리 (<u>C</u>)</button>
    <button>도움말 (<u>H</u>)</button>
  </nav>

  <div class="toolbar">
    <div class="tools">
      <button class="tool" aria-label="새로 만들기"><svg><use href="#i-new"/></svg></button>
      <button class="tool" aria-label="열기"><svg><use href="#i-open"/></svg></button>
      <button class="tool" aria-label="저장"><svg><use href="#i-save"/></svg></button>
      <button class="tool" aria-label="새 인쇄 조판"><svg><use href="#i-layout-new"/></svg></button>
      <button class="tool" aria-label="조판 관리자"><svg><use href="#i-layout-mgr"/></svg></button>
      <button class="tool" aria-label="스타일 관리자"><svg><use href="#i-style"/></svg></button>
    </div>
    <div class="tools">
      <button class="tool active" aria-label="지도 이동"><svg><use href="#i-hand"/></svg></button>
      <button class="tool" aria-label="선택 영역으로 이동"><svg><use href="#i-pan-sel"/></svg></button>
      <button class="tool" aria-label="확대"><svg><use href="#i-zoom-in"/></svg></button>
      <button class="tool" aria-label="축소"><svg><use href="#i-zoom-out"/></svg></button>
      <button class="tool" aria-label="전체 보기"><svg><use href="#i-zoom-full"/></svg></button>
      <button class="tool" aria-label="선택 영역으로 확대"><svg><use href="#i-zoom-sel"/></svg></button>
      <button class="tool" aria-label="레이어로 확대"><svg><use href="#i-zoom-layer"/></svg></button>
      <button class="tool" aria-label="원본 해상도" disabled><svg><use href="#i-zoom-native"/></svg></button>
      <button class="tool" aria-label="이전 영역"><svg><use href="#i-zoom-last"/></svg></button>
      <button class="tool" aria-label="다음 영역" disabled><svg><use href="#i-zoom-next"/></svg></button>
      <button class="tool" aria-label="새 지도 뷰"><svg><use href="#i-map-new"/></svg></button>
      <button class="tool" aria-label="새 3D 뷰"><svg><use href="#i-map3d-new"/></svg></button>
      <button class="tool" aria-label="새 북마크"><svg><use href="#i-bookmark-new"/></svg></button>
      <button class="tool" aria-label="북마크"><svg><use href="#i-bookmark"/></svg></button>
      <button class="tool" aria-label="시간 제어기"><svg><use href="#i-clock"/></svg></button>
      <button class="tool" aria-label="새로고침"><svg><use href="#i-refresh"/></svg></button>
    </div>
    <div class="tools">
      <button class="tool drop" aria-label="객체 선택"><svg><use href="#i-select"/></svg></button>
      <button class="tool drop" aria-label="값으로 선택"><svg><use href="#i-select-form"/></svg></button>
      <button class="tool drop" aria-label="선택 해제"><svg><use href="#i-deselect"/></svg></button>
      <button class="tool drop" aria-label="위치로 선택"><svg><use href="#i-select-loc"/></svg></button>
    </div>
    <div class="tools">
      <button class="tool" aria-label="객체 식별"><svg><use href="#i-identify"/></svg></button>
      <button class="tool" aria-label="필드 계산기"><svg><use href="#i-abacus"/></svg></button>
      <button class="tool" aria-label="툴박스"><svg><use href="#i-gear"/></svg></button>
      <button class="tool" aria-label="통계 요약"><svg><use href="#i-sum"/></svg></button>
      <button class="tool drop" aria-label="속성 테이블"><svg><use href="#i-table"/></svg></button>
      <button class="tool drop" aria-label="측정"><svg><use href="#i-measure"/></svg></button>
      <button class="tool" aria-label="맵 도움말"><svg><use href="#i-maptip"/></svg></button>
      <button class="tool drop" aria-label="액션 실행" disabled><svg><use href="#i-action-run"/></svg></button>
    </div>
  </div>

  <div class="toolbar">
    <div class="tools">
      <button class="tool" aria-label="데이터 원본 관리자"><svg><use href="#i-datasource"/></svg></button>
      <button class="tool" aria-label="새 GeoPackage"><svg><use href="#i-geopackage"/></svg></button>
      <button class="tool" aria-label="새 Shapefile"><svg><use href="#i-shapefile"/></svg></button>
      <button class="tool" aria-label="새 SpatiaLite"><svg><use href="#i-spatialite"/></svg></button>
      <button class="tool" aria-label="임시 레이어"><svg><use href="#i-memory"/></svg></button>
      <button class="tool" aria-label="새 메시"><svg><use href="#i-mesh"/></svg></button>
      <button class="tool" aria-label="가상 레이어"><svg><use href="#i-virtual"/></svg></button>
    </div>
    <div class="tools">
      <button class="tool" aria-label="현재 편집" disabled><svg><use href="#i-edits"/></svg></button>
      <button class="tool" aria-label="편집 모드" disabled><svg><use href="#i-pencil"/></svg></button>
      <button class="tool" aria-label="편집 저장" disabled><svg><use href="#i-save-edit"/></svg></button>
      <button class="tool drop" aria-label="디지타이즈" disabled><svg><use href="#i-digitize"/></svg></button>
      <button class="tool" aria-label="객체 추가" disabled><svg><use href="#i-vertex-add"/></svg></button>
      <button class="tool drop" aria-label="꼭짓점 도구" disabled><svg><use href="#i-vertex"/></svg></button>
      <button class="tool" aria-label="속성 수정" disabled><svg><use href="#i-attr-edit"/></svg></button>
      <button class="tool" aria-label="삭제" disabled><svg><use href="#i-trash"/></svg></button>
      <button class="tool" aria-label="잘라내기" disabled><svg><use href="#i-cut"/></svg></button>
      <button class="tool" aria-label="복사" disabled><svg><use href="#i-copy"/></svg></button>
      <button class="tool" aria-label="붙여넣기" disabled><svg><use href="#i-paste"/></svg></button>
      <button class="tool" aria-label="실행 취소" disabled><svg><use href="#i-undo"/></svg></button>
      <button class="tool" aria-label="다시 실행" disabled><svg><use href="#i-redo"/></svg></button>
    </div>
    <div class="tools">
      <button class="tool" aria-label="라벨 옵션"><svg><use href="#i-label-plain"/></svg></button>
      <button class="tool" aria-label="도표 옵션"><svg><use href="#i-diagram"/></svg></button>
      <span class="sep"></span>
      <button class="tool" aria-label="고정 라벨"><svg><use href="#i-pin"/></svg></button>
      <button class="tool" aria-label="배치되지 않은 라벨"><svg><use href="#i-label-red"/></svg></button>
      <span class="sep"></span>
      <button class="tool" aria-label="라벨 고정" disabled><svg><use href="#i-pin"/></svg></button>
      <button class="tool" aria-label="라벨 표시" disabled><svg><use href="#i-label-show"/></svg></button>
      <button class="tool" aria-label="라벨 이동" disabled><svg><use href="#i-label-move"/></svg></button>
      <button class="tool" aria-label="라벨 회전" disabled><svg><use href="#i-label-rotate"/></svg></button>
      <button class="tool" aria-label="라벨 변경" disabled><svg><use href="#i-label-edit"/></svg></button>
    </div>
    <div class="tools"><button class="tool" aria-label="메타 검색"><svg><use href="#i-metasearch"/></svg></button></div>
    <div class="tools"><button class="tool" aria-label="파이썬 콘솔"><svg><use href="#i-python"/></svg></button></div>
    <div class="tools"><button class="tool" aria-label="도움말 목차"><svg><use href="#i-help"/></svg></button></div>
    <div class="tools"></div>
  </div>

  <main class="workspace">
    <aside class="layers">
      <h2>레이어</h2>
      <div class="layer-tools">
        <button aria-label="스타일 패널"><svg><use href="#i-symbology"/></svg></button>
        <button aria-label="그룹 추가"><svg><use href="#i-group"/></svg></button>
      </div>
      <ul class="layer-tree">
        <li class="current"><input type="checkbox" aria-label="레이어 1" checked></li>
        <li><input type="checkbox" aria-label="레이어 2"></li>
        <li><input type="checkbox" aria-label="레이어 3"></li>
        <li><input type="checkbox" aria-label="레이어 4"></li>
        <li><input type="checkbox" aria-label="레이어 5" checked></li>
        <li><input type="checkbox" aria-label="레이어 6" checked></li>
      </ul>
    </aside>
    <svg class="map" viewBox="1425 384 2418 1708" preserveAspectRatio="xMinYMin slice">
      <!-- districts -->
      <g class="land">
        <path d="M3843 1504L3834 1513 3801 1537 3795 1553 3776 1568 3738 1591 3730 1605 3730 1654 3711 1654 3681 1634 3673 1620 3679 1611 3657 1600 3624 1595 3606 1588 3594 1590 3580 1586 3566 1590 3552 1590 3557 1607 3544 1630 3524 1634 3509 1648 3506 1663 3485 1676 3475 1697 3463 1693 3438 1693 3428 1690 3400 1697 3395 1712 3386 1740 3375 1744 3361 1755 3350 1786 3342 1790 3339 1803 3330 1810 3323 1825 3326 1849 3320 1888 3314 1897 3296 1908 3285 1906 3259 1914 3257 1924 3238 1957 3220 1964 3206 1964 3188 1959 3161 1952 3146 1945 3125 1943 3103 1946 3094 1944 3084 1955 3092 1994 3089 2003 3116 2027 3102 2048 3083 2055 3079 2063 3082 2100H3860V1504z"/>
        <path d="M1400 1997H1425L1483 1991 1489 1970 2569 1970 2572 1998 2591 2011 2621 2013 2636 2012 2650 2023 2671 2045 2694 2068 2700 2088 2707 2100H1400z"/>
        <path d="M2580 1840L2598 1850 2597 1867 2609 1877 2606 1900 2598 1922 2580 1935z"/>
      </g>
      <!-- boundaries -->
      <g class="lines">
        <path d="M2834 384L2857 403 2872 409 2932 434 3004 468 3018 470 3031 477 3049 490 3096 498 3128 507 3166 514 3209 507 3228 498 3291 475 3354 436 3405 384M2883 384L2872 409"/>
        <path d="M3031 477L3033 546 3035 568 3037 581 3048 701 3063 866 3164 878 3269 922 3416 974 3452 990 3460 997 3456 1002 3475 1007 3497 1020 3541 1046 3591 1090 3650 1192 3697 1280 3741 1350 3834 1513"/>
        <path d="M3783 384L3766 420 3843 463"/>
        <path d="M2580 1186L2662 1172 2680 1228 2693 1258 2697 1281 2709 1317 2791 1418 2761 1446 2786 1452 2794 1458 2792 1493 2825 1480 2838 1481 2852 1468 2870 1474 2881 1465 2902 1467 2908 1462 2934 1466 2958 1460 2975 1465 2997 1458 3013 1446 3033 1441 3044 1431 3067 1431 3077 1424 3102 1413 3118 1397 3141 1387 3155 1370 3162 1357 3177 1364 3185 1361 3193 1364 3232 1355 3260 1353 3274 1350 3269 1359 3269 1381 3265 1398 3277 1428 3292 1430 3303 1438 3313 1455 3325 1483 3333 1483 3341 1494 3354 1504 3371 1529 3377 1540 3377 1588 3393 1605 3411 1610 3428 1610 3427 1623 3420 1632 3417 1655 3424 1671 3422 1692"/>
        <path d="M1576 1970V1988L1556 2017 1543 2066 1548 2100M2600 1808L2603 1817 2600 1827"/>
      </g>
    </svg>
  </main>

  <footer class="statusbar">
    <div class="locator">
      <svg><use href="#i-search"/></svg>
      <input type="text" placeholder="위치를 찾으려면 입력하세요 (Ctrl+K)" aria-label="위치 검색">
    </div>
    <div class="status-group position">
      <label for="coord">좌표</label>
      <input class="field coord" id="coord" type="text" value="951811, 1946642">
      <button class="flat" aria-label="범위 전환"><svg><use href="#i-mouse"/></svg></button>
    </div>
    <div class="status-group">
      <label for="scale">축척</label>
      <div class="combo scale">
        <select id="scale"><option>1:70672</option></select>
      </div>
    </div>
    <button class="flat lock" aria-label="축척 잠금"><svg><use href="#i-lock"/></svg></button>
    <div class="status-group">
      <label for="magnifier">확대경</label>
      <div class="spin">
        <input id="magnifier" type="text" value="100%">
        <div class="steps"><button class="up" aria-label="증가"></button><button class="down" aria-label="감소"></button></div>
      </div>
    </div>
    <div class="status-group wide">
      <label for="rotation">회전</label>
      <div class="spin">
        <input id="rotation" type="text" value="0.0 °">
        <div class="steps"><button class="up" aria-label="증가"></button><button class="down" aria-label="감소"></button></div>
      </div>
    </div>
    <div class="status-group render">
      <input type="checkbox" id="render" checked>
      <label for="render">렌더링</label>
    </div>
    <button class="crs-status"><svg><use href="#i-crs"/></svg>알 수 없는 좌표계</button>
  </footer>

  <!-- Layer properties window -->
  <section class="dialog" role="dialog" aria-labelledby="dlg-title">
    <header class="dialog-title">
      <svg class="logo"><use href="#i-qgis"/></svg>
      <h2 id="dlg-title">Layer Properties - 도로도형_전체분_서울특별시 — 11000/TL_SPRD_MANAGE.shp — 원본</h2>
      <button aria-label="닫기"><svg><use href="#i-close"/></svg></button>
    </header>

    <div class="dialog-body">
      <div class="sidebar">
        <div class="side-search">
          <svg><use href="#i-search"/></svg>
          <input type="text" aria-label="옵션 검색">
        </div>
        <div class="side-main">
          <nav class="pages">
            <button><svg><use href="#i-info"/></svg>정보</button>
            <button class="selected"><svg><use href="#i-source"/></svg>원본</button>
            <button><svg><use href="#i-symbology"/></svg>심볼</button>
            <button><svg><use href="#i-label"/></svg>라벨</button>
            <button><svg><use href="#i-mask"/></svg>마스크</button>
            <button><svg><use href="#i-3d"/></svg>3D 뷰</button>
            <button><svg><use href="#i-diagram"/></svg>도표</button>
            <button><svg><use href="#i-fields"/></svg>필드</button>
            <button><svg><use href="#i-form"/></svg>속성 양식</button>
            <button><svg><use href="#i-join"/></svg>결합</button>
            <button><svg><use href="#i-aux"/></svg>보조 저장소</button>
            <button><svg><use href="#i-action"/></svg>액션</button>
            <button><svg><use href="#i-display"/></svg>디스플레이</button>
            <button><svg><use href="#i-render"/></svg>렌더링</button>
          </nav>
          <div class="scrollbar side">
            <button class="up" aria-label="위로"></button>
            <div class="track"><div class="thumb"></div></div>
            <button class="down" aria-label="아래로"></button>
          </div>
        </div>
      </div>

      <div class="page">
        <div class="page-main">
          <div class="splitter"></div>
          <div class="sections">
            <h3>설정</h3>
            <div class="box">
              <div class="row">
                <label for="layer-name">레이어 이름</label>
                <input class="field grow name" id="layer-name" type="text" value="도로도형_전체분_서울특별시 — 11000/TL_SPRD_MANAGE.shp">
              </div>
              <div class="row">
                <label for="encoding">데이터 원본 인코딩</label>
                <div class="combo encoding"><select id="encoding"><option>UTF-8</option></select></div>
              </div>
            </div>

            <h3>지정된 좌표계 (CRS)</h3>
            <div class="box crs">
              <div class="row">
                <div class="combo grow"><select aria-label="좌표계"><option>Default CRS: EPSG:4326 - WGS 84</option></select></div>
                <button class="btn icon" aria-label="좌표계 선택"><svg><use href="#i-pen-badge"/></svg></button>
              </div>
              <p class="note">이 옵션을 변경해도 원본 데이터 원본이 수정되거나 재투영이 수행되지 않습니다. 오히려 감지 할 수 없거나 잘못<br>감지된 경우 이 프로젝트 내에서 레이어의 좌표계를 재정의하는 데 사용할 수 있습니다.</p>
              <p>공간처리 “<i>레이어 재투영</i>” 도구는 객체를 재투영하는데 사용하고 데이터 원본의 좌표계를 영구적으로 변경합니다 .</p>
            </div>

            <h3>레이어 원본</h3>
            <div class="box">
              <div class="row">
                <div class="field path grow">
                  <input type="text" aria-label="레이어 원본" value="자료/4.테블로/테블로 프로젝트/db/지역DB/도로명이 부여된 도로 도형/도로도형_전체분_서울특별시.zip">
                  <button class="flat" aria-label="지우기"><svg><use href="#i-clear"/></svg></button>
                </div>
                <button class="btn more">…</button>
              </div>
            </div>

            <h3>도형</h3>
            <div class="box geometry">
              <div class="row">
                <button class="btn index">공간 인덱스 생성</button>
                <button class="btn">범위 갱신</button>
              </div>
            </div>

            <h3>제공자 객체 필터</h3>
            <div class="box">
              <textarea aria-label="제공자 객체 필터"></textarea>
            </div>
          </div>
          <div class="scrollbar main">
            <button class="up" aria-label="위로"></button>
            <div class="track"><div class="thumb"></div></div>
            <button class="down" aria-label="아래로"></button>
          </div>
        </div>

        <div class="dialog-buttons">
          <button class="btn style-menu">스타일</button>
          <button class="btn">확인</button>
          <button class="btn">취소</button>
          <button class="btn primary">적용</button>
          <button class="btn">도움말</button>
        </div>
      </div>
    </div>
  </section>

</body>
</html>
```
FILE: styles.css
```css
:root {
  --bg: #efefef;
  --line: #b4b4b4;
  --border: #ababab;
  --dark: #5a5a5a;
  --arrow: #5c5c5c;
  --button-bg: linear-gradient(#ffffff, #ececec);
}

* {
  box-sizing: border-box;
}

body {
  margin: 0;
  height: 100vh;
  padding-top: 18px;
  display: flex;
  flex-direction: column;
  overflow: hidden;
  background: #000;
  color: #000;
  font-family: "Noto Sans CJK KR", sans-serif;
  font-size: 38px;
  font-weight: 300;
  line-height: 42px;
}

h1, h2, h3, p, ul {
  margin: 0;
  padding: 0;
  font-size: inherit;
  font-weight: inherit;
}

button, input, select, textarea {
  font: inherit;
  color: inherit;
  margin: 0;
  padding: 0;
  border: none;
  background: none;
  outline: none;
}

svg {
  display: block;
  flex: none;
}

.sprite {
  position: absolute;
  width: 0;
  height: 0;
}

.grow {
  flex: 1;
  min-width: 0;
}

/* Main window title and menu */
.titlebar {
  display: flex;
  align-items: center;
  flex: none;
  height: 67px;
  background: #f3f3f3;
  color: #8c8c8c;
}

.titlebar .logo {
  width: 50px;
  height: 50px;
  margin-right: 4px;
}

.titlebar h1 {
  flex: 1;
  padding-bottom: 4px;
}

.win-buttons button {
  width: 138px;
  height: 64px;
}

.win-buttons {
  display: flex;
  margin-right: 6px;
}

.win-buttons svg {
  width: 20px;
  height: 20px;
  margin: 0 auto;
}

.menubar {
  display: flex;
  flex: none;
  gap: 46px;
  height: 62px;
  padding: 0 28px 4px;
  background: var(--bg);
  border-bottom: 3px solid #d8d8d8;
  color: #979797;
}

.menubar button {
  white-space: nowrap;
}

.menubar u {
  text-underline-offset: 6px;
}

/* Toolbars */
.toolbar {
  display: flex;
  align-items: center;
  flex: none;
  height: 117px;
  padding-left: 15px;
  gap: 27px;
  background: linear-gradient(#fcfcfc, #eeeeee);
  border-bottom: 3px solid var(--line);
}

.tools {
  display: flex;
  align-items: center;
  gap: 3px;
}

.tools::before {
  content: "";
  width: 13px;
  height: 51px;
  margin-right: 8px;
  background: repeating-linear-gradient(transparent 0 3px, #f3f3f3 3px 9px),
    repeating-linear-gradient(90deg, #bdbdbd 0 4px, #f3f3f3 4px 9px);
}

.tool {
  display: flex;
  align-items: center;
  width: 96px;
  height: 93px;
  padding: 0 12px;
  border-radius: 8px;
}

.tool svg {
  width: 72px;
  height: 72px;
}

.tool.active {
  padding: 0 9px;
  background: #dcdcdc;
  border: 3px solid #a8a8a8;
}

.tool.drop {
  width: 132px;
}

.tool.drop::after,
.combo::after,
.style-menu::after {
  content: "";
  border: 12px solid transparent;
  border-top: 13px solid var(--arrow);
  border-bottom: none;
}

.tool.drop::after {
  margin-left: 19px;
}

.tool:disabled {
  filter: grayscale(.7);
  opacity: .42;
}

.sep {
  width: 18px;
  height: 57px;
  background: linear-gradient(90deg, transparent 10px, #c8c8c8 10px 13px, #fff 13px 16px, transparent 16px);
}

/* Layers panel and map */
.workspace {
  display: flex;
  flex: 1;
  min-height: 0;
  padding-top: 3px;
  background: #e9e9e9;
}

.layers {
  display: flex;
  flex-direction: column;
  width: 1403px;
}

.layers h2 {
  padding: 5px 14px 15px;
  font-weight: 400;
}

.layer-tools {
  display: flex;
  gap: 24px;
  height: 86px;
  padding: 12px 22px;
}

.layer-tools svg {
  width: 52px;
  height: 52px;
}

.layer-tree {
  flex: 1;
  list-style: none;
  background: #fff;
  border: 2px solid var(--line);
}

.layer-tree li {
  height: 54px;
  padding: 6px 70px;
}

.layer-tree .current {
  background: var(--bg);
}

input[type="checkbox"] {
  appearance: none;
  flex: none;
  display: flex;
  align-items: center;
  justify-content: center;
  width: 42px;
  height: 42px;
  background: linear-gradient(#f6f6f6, #fff);
  border: 3px solid var(--line);
}

input[type="checkbox"]:checked::after {
  content: "";
  width: 12px;
  height: 26px;
  margin-bottom: 4px;
  border: solid #000;
  border-width: 0 5px 5px 0;
  transform: rotate(32deg);
}

.map {
  flex: 1;
  min-width: 0;
  height: 100%;
  margin-left: 20px;
  background: #000;
  border-left: 2px solid #8c8c8c;
}

.map .land {
  fill: #080600;
  stroke: #262626;
  stroke-width: 3;
}

.map .lines {
  fill: none;
  stroke: #242424;
  stroke-width: 3;
}

/* Status bar */
.statusbar {
  display: flex;
  align-items: center;
  flex: none;
  gap: 24px;
  height: 86px;
  padding: 0 30px 0 12px;
  background: var(--bg);
  border-top: 3px solid var(--line);
  font-size: 36px;
  white-space: nowrap;
}

.field,
.locator,
.spin {
  height: 66px;
  background: #fff;
  border: 3px solid var(--border);
  border-radius: 8px;
}

.locator {
  display: flex;
  align-items: center;
  width: 1068px;
  margin-right: auto;
  padding-left: 24px;
  gap: 24px;
  font-size: 39px;
}

.locator svg {
  width: 38px;
  height: 38px;
}

.locator input {
  flex: 1;
}

.locator input::placeholder {
  color: #808080;
}

.status-group {
  display: flex;
  align-items: center;
  gap: 12px;
}

.status-group.position {
  margin-right: 16px;
}

.coord {
  width: 332px;
  text-align: center;
}

.flat svg {
  width: 48px;
  height: 48px;
}

.combo {
  display: flex;
  align-items: center;
  height: 66px;
  background: var(--button-bg);
  border: 3px solid var(--border);
  border-radius: 8px;
}

.combo select {
  appearance: none;
  flex: 1;
  min-width: 0;
  height: 60px;
  padding-left: 12px;
}

.combo::after {
  margin-right: 20px;
}

.combo.scale {
  width: 262px;
}

.scale select {
  padding-left: 8px;
  border-right: 2px solid var(--line);
}

.scale::after {
  margin-left: 16px;
}

.spin {
  display: flex;
  width: 266px;
  height: 60px;
}

.spin input {
  flex: 1;
  min-width: 0;
  padding-left: 12px;
}

.steps {
  display: flex;
  flex-direction: column;
  justify-content: center;
  gap: 8px;
  width: 44px;
  border-left: 2px solid var(--line);
  background: var(--bg);
  border-radius: 0 6px 6px 0;
}

.up::before,
.down::before {
  content: "";
  display: block;
  width: 0;
  margin: 0 auto;
  border: 12px solid transparent;
}

.up::before {
  border-top: none;
  border-bottom-color: var(--arrow);
}

.down::before {
  border-bottom: none;
  border-top-color: var(--arrow);
}

.status-group.wide {
  gap: 30px;
}

.status-group.render {
  gap: 18px;
  margin-right: 18px;
}

.crs-status {
  display: flex;
  align-items: center;
  gap: 8px;
}

.crs-status svg {
  width: 48px;
  height: 48px;
  filter: grayscale(1);
}

/* Layer properties window, floats over the main one */
.dialog {
  position: absolute;
  left: 113px;
  top: 367px;
  width: 64.5vw;
  height: 74.2vh;
  display: flex;
  flex-direction: column;
  overflow: hidden;
  background: var(--bg);
  border: 2px solid #a6a6a6;
  border-radius: 24px;
  box-shadow: 0 30px 90px rgba(0, 0, 0, 0.45);
  font-size: 39px;
}

.dialog-title {
  display: flex;
  align-items: center;
  flex: none;
  height: 82px;
  padding: 0 40px 2px 16px;
  background: linear-gradient(90deg, #f0f4f3, #f3f3f1);
}

.dialog-title h2 {
  flex: 1;
  font-size: 36px;
  font-weight: 400;
}

.dialog-title .logo {
  width: 52px;
  height: 52px;
}

.dialog-title button svg {
  width: 21px;
  height: 21px;
}

.dialog-body {
  display: flex;
  flex: 1;
  min-height: 0;
}

.sidebar {
  display: flex;
  flex-direction: column;
  width: 449px;
  background: var(--dark);
}

.side-search {
  display: flex;
  align-items: center;
  flex: none;
  height: 66px;
  margin-bottom: 18px;
  padding-left: 24px;
  gap: 16px;
  background: #fff;
  border: 3px solid var(--border);
  border-radius: 8px;
}

.side-search svg {
  width: 38px;
  height: 38px;
}

.side-search input {
  flex: 1;
  min-width: 0;
}

.side-main {
  display: flex;
  flex: 1;
  min-height: 0;
}

.pages {
  flex: 1;
  overflow: hidden;
}

.pages button {
  display: flex;
  align-items: center;
  width: 100%;
  height: 108px;
  padding: 0 0 3px 12px;
  gap: 22px;
  color: #fff;
}

.pages button svg {
  width: 77px;
  height: 77px;
}

.pages .selected {
  padding-left: 22px;
  background: var(--bg);
  color: #000;
}

.scrollbar {
  display: flex;
  flex-direction: column;
  width: 41px;
  background: #fafafa;
  border-left: 2px solid #c4c4c4;
}

.scrollbar.main {
  margin-top: 8px;
}

.scrollbar button {
  flex: none;
  height: 40px;
}

.scrollbar .track {
  flex: 1;
  background: #e4e4e4;
  border: solid #bdbdbd;
  border-width: 3px 0;
}

.scrollbar .thumb {
  background: linear-gradient(90deg, #fff, #f0f0f0);
  border-bottom: 3px solid #bdbdbd;
}

.side .thumb {
  height: 59%;
}

.main .thumb {
  height: 77%;
}

.page {
  display: flex;
  flex-direction: column;
  flex: 1;
  min-width: 0;
}

.page-main {
  display: flex;
  flex: 1;
  min-height: 0;
  padding-right: 10px;
}

.splitter {
  align-self: center;
  width: 4px;
  height: 50px;
  margin: 90px 6px 0;
  background: repeating-linear-gradient(#bdbdbd 0 3px, transparent 3px 9px);
}

.sections {
  flex: 1;
  min-width: 0;
  overflow: hidden;
}

.sections h3 {
  display: flex;
  align-items: center;
  height: 60px;
  margin-top: 14px;
  padding: 0 0 4px 5px;
  gap: 27px;
  font-weight: 400;
}

.sections h3:first-child {
  margin-top: 4px;
}

.sections h3::before {
  content: "";
  margin-top: 12px;
  border: 17px solid transparent;
  border-top: 22px solid #333;
  border-bottom: none;
}

.box {
  display: flex;
  flex-direction: column;
  gap: 18px;
  padding: 24px 34px 33px 31px;
  background: #ececec;
  border: 2px solid #d6d6d6;
}

.box.crs {
  gap: 14px;
  padding-bottom: 55px;
}

.box.geometry {
  padding-bottom: 52px;
}

.box p,
.crs .combo {
  font-size: 40px;
}

.box .note {
  margin-bottom: 20px;
  font-weight: 400;
}

.box p {
  white-space: nowrap;
}

.row {
  display: flex;
  align-items: center;
  gap: 18px;
}

.crs .row {
  gap: 14px;
}

.row .field {
  padding-left: 8px;
}

.row .name {
  font-size: 38px;
}

.crs .combo {
  height: 69px;
}

.encoding {
  width: 974px;
}

.path {
  display: flex;
  align-items: center;
  padding-right: 20px;
}

.path input {
  flex: 1;
  min-width: 0;
}

.path svg {
  width: 42px;
  height: 42px;
}

.btn {
  width: 240px;
  height: 60px;
  background: var(--button-bg);
  border: 3px solid var(--border);
  border-radius: 8px;
  white-space: nowrap;
}

.btn.index {
  width: 300px;
}

.btn.icon {
  display: flex;
  align-items: center;
  justify-content: center;
  width: 70px;
  height: 69px;
}

.btn.icon svg {
  width: 50px;
  height: 50px;
}

.btn.more {
  width: 84px;
}

.btn.primary {
  background: linear-gradient(#fcfdfe, #e2e8ec);
  border-color: #42a9fa;
}

textarea {
  height: 480px;
  background: #fff;
  border: 2px solid var(--line);
  resize: none;
}

.dialog-buttons {
  display: flex;
  gap: 18px;
  height: 87px;
  padding: 18px 9px 0 13px;
}

.style-menu {
  display: flex;
  align-items: center;
  justify-content: space-between;
  margin-right: auto;
  padding: 0 12px 0 46px;
}
```
